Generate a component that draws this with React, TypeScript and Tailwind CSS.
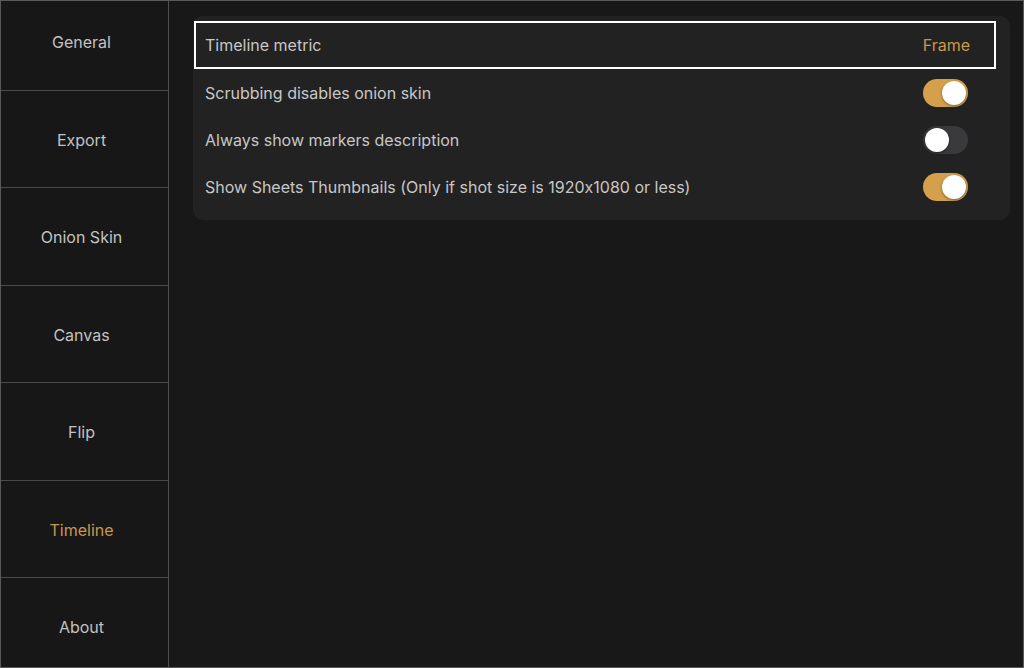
import React from "react";

const items = ["General", "Export", "Onion Skin", "Canvas", "Flip", "Timeline", "About"];

function Toggle({ on }: { on: boolean }) {
  return (
    <div
      className={`w-[45px] h-[28px] rounded-full p-[2px] flex items-center ${
        on ? "bg-[#d4a04c] justify-end" : "bg-[#3a3a3c] justify-start"
      }`}
    >
      <div className="w-[24px] h-[24px] rounded-full bg-white shadow-[0_1px_3px_rgba(0,0,0,0.4)]" />
    </div>
  );
}

export default function App() {
  return (
    <div
      className="w-[1024px] h-[668px] border border-[#5a5a5a] bg-[#181818] flex overflow-hidden"
      style={{ fontFamily: "Inter, 'Noto Sans', sans-serif", fontFeatureSettings: "'calt' 0" }}
    >
      <div className="w-[168px] shrink-0 border-r border-[#4f4f4f] bg-[#171717] overflow-hidden">
        <div className="-mt-[8px]">
          {items.map((it) => (
            <div
              key={it}
              className={`h-[97.5px] border-b border-[#4a4a4a] flex items-center justify-center pr-[6px] pt-[2px] text-[16px] ${
                it === "Timeline" ? "text-[#c8984c]" : "text-[#c2c2c2]"
              }`}
            >
              {it}
            </div>
          ))}
        </div>
      </div>
      <div className="flex-1 pl-[24px] pt-[15px] pr-[13px]">
        <div className="bg-[#222222] rounded-[10px] pl-[1px] pr-[14px] pt-[5px] pb-[10px] flex flex-col">
          <div className="h-[48px] border-2 border-white flex items-center justify-between pl-[9px] pr-[24px] text-[16px]">
            <span className="text-[#c7c7c7]">Timeline metric</span>
            <span className="text-[#c8984c]">Frame</span>
          </div>
          {[
            ["Scrubbing disables onion skin", true],
            ["Always show markers description", false],
            ["Show Sheets Thumbnails (Only if shot size is 1920x1080 or less)", true],
          ].map(([label, on]) => (
            <div
              key={label as string}
              className="h-[47px] flex items-center justify-between pl-[11px] pr-[28px] text-[16px]"
            >
              <span className="text-[#c7c7c7]">{label as string}</span>
              <Toggle on={on as boolean} />
            </div>
          ))}
        </div>
      </div>
    </div>
  );
}
